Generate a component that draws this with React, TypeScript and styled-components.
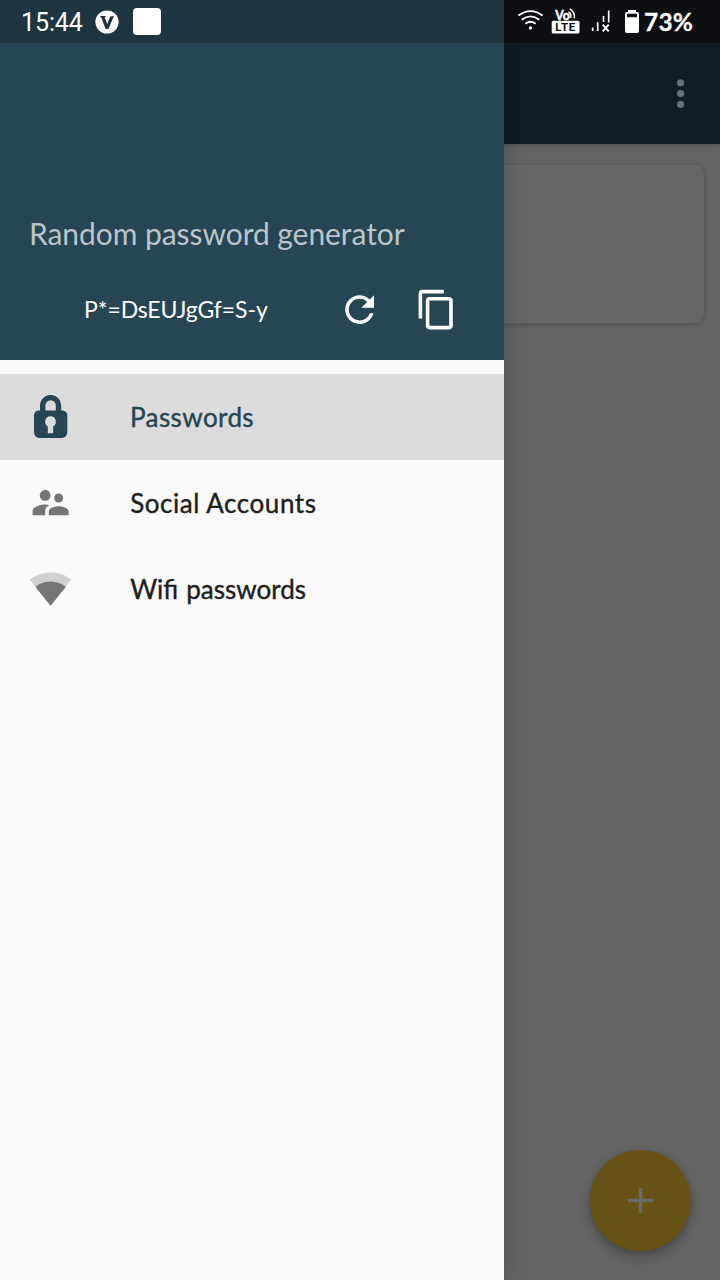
import React from "react";
import styled, { createGlobalStyle } from "styled-components";

const GlobalStyle = createGlobalStyle`
  * { box-sizing: border-box; }
  body { margin: 0; background: #fafafa; }
  svg { display: block; flex: none; }
`;

const Screen = styled.div`
  position: relative;
  width: 720px;
  height: 1280px;
  overflow: hidden;
  background: #646464;
  font-family: Lato, "Liberation Sans", sans-serif;
`;

const Page = styled.main`
  display: flex;
  flex-direction: column;
  height: 100%;
`;

const StatusStrip = styled.div`
  height: 43px;
  background: #0e0f13;
`;

const Toolbar = styled.header`
  display: flex;
  justify-content: flex-end;
  align-items: center;
  height: 101px;
  padding-right: 18px;
  background: #101d22;
  box-shadow: 0 1px 5px rgba(0, 0, 0, 0.25);
`;

const Card = styled.section`
  height: 158px;
  margin: 21px 16px 0;
  border-radius: 8px;
  background: #666666;
  box-shadow: 0 1px 5px rgba(0, 0, 0, 0.25);
`;

const AddButton = styled.button`
  display: flex;
  align-items: center;
  justify-content: center;
  width: 101px;
  height: 101px;
  margin: auto 29px 29px auto;
  padding: 0;
  border: 0;
  border-radius: 50%;
  background: #665214;
  box-shadow: 0 6px 12px rgba(0, 0, 0, 0.25), 0 0 5px rgba(0, 0, 0, 0.1);
`;

const Drawer = styled.aside`
  position: absolute;
  inset: 0 auto 0 0;
  width: 504px;
  background: #fafafa;
  box-shadow: 0 0 24px rgba(0, 0, 0, 0.2);
`;

const DrawerHeader = styled.div`
  display: flex;
  flex-direction: column;
  height: 360px;
  background: #274653;
`;

const DrawerStatus = styled.div`
  height: 43px;
  background: #1e343f;
`;

const Title = styled.h1`
  margin: 167px 0 0 29px;
  font-size: 30px;
  font-weight: 400;
  line-height: 46px;
  letter-spacing: -0.06px;
  white-space: nowrap;
  color: #b9c5ca;
`;

const Generator = styled.div`
  display: flex;
  align-items: center;
  height: 44px;
  margin-top: 32px;
`;

const Generated = styled.span`
  width: 254px;
  padding: 0 0 3px 84px;
  font-size: 23px;
  letter-spacing: -0.1px;
  white-space: nowrap;
  color: #fff;
`;

const IconButton = styled.button<{ $gap: number }>`
  margin: 0 0 0 ${(p) => p.$gap}px;
  padding: 0;
  border: 0;
  background: none;
`;

const Menu = styled.nav`
  padding-top: 14px;
`;

const MenuItem = styled.a<{ $active?: boolean }>`
  display: flex;
  align-items: center;
  gap: 58px;
  height: 86px;
  padding-left: 29px;
  font-size: 26px;
  color: ${(p) => (p.$active ? "#274653" : "#1f1f1f")};
  background: ${(p) => (p.$active ? "#dcdcdc" : "transparent")};
`;

const MenuLabel = styled.span<{ $spacing: number }>`
  letter-spacing: ${(p) => p.$spacing}px;
  word-spacing: ${(p) => (p.$spacing ? 0 : 1.5)}px;
  white-space: nowrap;
  -webkit-text-stroke: 0.4px currentColor;
`;

const StatusBar = styled.div`
  position: absolute;
  inset: 0 0 auto 0;
  display: flex;
  align-items: center;
  height: 43px;
  padding: 0 27px 0 21px;
  color: #fff;
`;

const Clock = styled.span`
  width: 74px;
  padding-top: 2px;
  font: 400 25px/43px Roboto, sans-serif;
  letter-spacing: -0.1px;
`;

const Notice = styled.span`
  width: 28px;
  height: 27px;
  margin-left: 14px;
  border-radius: 4px;
  background: #fff;
`;

const Battery = styled.span`
  width: 50px;
  padding-left: 1px;
  font-size: 24.5px;
  font-weight: 700;
  line-height: 43px;
  letter-spacing: 0.2px;
  -webkit-text-stroke: 0.3px currentColor;
`;

const StatusIcons = styled.div`
  display: flex;
  align-items: center;
  margin-left: auto;
`;

const MaterialIcon = ({ children, fill = "#fff" }: { children: React.ReactNode; fill?: string }) => (
  <svg width="43.2" height="43.2" viewBox="0 0 24 24" fill={fill}>{children}</svg>
);

const LockIcon = () => (
  <svg width="43" height="44" viewBox="0 0 43 44">
    <path d="M13.700 18V10.500a7.900 7.900 0 0 1 15.800 0V18" fill="none" stroke="#274653" strokeWidth="5.400" />
    <path fillRule="evenodd" fill="#274653" d="M9 15.500h25q4.300 1 4.300 5V36.500q0 5.500-5 6.500H10Q5 42 5 36.500V20.500q0-4 4-5zM21.500 21.200a5.500 5.500 0 0 0-2.700 10.200v6.900h5.400v-6.900a5.500 5.500 0 0 0-2.700-10.200z" />
  </svg>
);

const PhoneIcons = () => (
  <svg width="127" height="43" viewBox="516 0 127 43">
    <g fill="none" stroke="#fff" strokeWidth="1.900">
      <path d="M518.300 15.600q12.200-9 24.400 0" />
      <path d="M521.700 19.700q8.800-6.600 17.600 0" />
      <path d="M525.400 23.700q5.100-3.800 10.200 0" />
    </g>
    <circle cx="530.500" cy="27.900" r="1.700" fill="#fff" />
    <text x="555.300" y="19.600" fontFamily="Lato, sans-serif" fontWeight="700" fontSize="13" fill="#fff" stroke="#fff" strokeWidth=".5" textLength="14.500" lengthAdjust="spacingAndGlyphs">Vo</text>
    <g fill="none" stroke="#fff" strokeWidth="1.500">
      <path d="M568.500 12q3 1.500 2.200 6" />
      <path d="M569.800 8.900q5.500 3.500 4.500 9.500" />
    </g>
    <rect x="551.700" y="20.700" width="27.800" height="12.800" rx="1.500" fill="#fff" />
    <text x="555.300" y="31.300" fontFamily="Roboto, sans-serif" fontWeight="700" fontSize="11.500" fill="#0e0f13" textLength="20">LTE</text>
    <g stroke="#fff" strokeWidth="1.700">
      <path d="M592.700 27.500v3.500M597.700 22.300v8.700M603.500 16v6M608.700 10.500v12" />
      <path d="M602.700 24.700l6 6.600M608.700 24.700l-6 6.600" strokeWidth="1.900" />
    </g>
    <path d="M628 10h8v2h1a2 2 0 0 1 2 2v17a2 2 0 0 1-2 2h-10a2 2 0 0 1-2-2V14a2 2 0 0 1 2-2h1z" fill="#fff" />
    <path d="M627 13.700h10v3.500h-10z" fill="#0e0f13" />
  </svg>
);

export default function App() {
  return (
    <Screen>
      <GlobalStyle />
      <Page>
        <StatusStrip />
        <Toolbar>
          <MaterialIcon fill="#6b7072">
            <path d="M12 8a2 2 0 1 0 0-4 2 2 0 0 0 0 4zm0 2a2 2 0 1 0 0 4 2 2 0 0 0 0-4zm0 6a2 2 0 1 0 0 4 2 2 0 0 0 0-4z" />
          </MaterialIcon>
        </Toolbar>
        <Card />
        <AddButton aria-label="Add">
          <svg width="25" height="25" viewBox="0 0 25 25" fill="#6b6b69">
            <path d="M10.700 0h3.600v10.700H25v3.600H14.300V25h-3.600V14.300H0v-3.600h10.700z" />
          </svg>
        </AddButton>
      </Page>
      <Drawer>
        <DrawerHeader>
          <DrawerStatus />
          <Title>Random password generator</Title>
          <Generator>
            <Generated>P*=DsEUJgGf=S-y</Generated>
            <IconButton $gap={84} aria-label="Refresh">
              <MaterialIcon>
                <path d="M17.650 6.350C16.200 4.900 14.210 4 12 4c-4.420 0-7.990 3.580-7.990 8s3.570 8 7.990 8c3.730 0 6.840-2.550 7.730-6h-2.080c-.82 2.330-3.040 4-5.650 4-3.310 0-6-2.690-6-6s2.690-6 6-6c1.660 0 3.140.69 4.220 1.780L13 11h7V4l-2.350 2.350z" />
              </MaterialIcon>
            </IconButton>
            <IconButton $gap={34} aria-label="Copy">
              <MaterialIcon>
                <path d="M16 1H4c-1.100 0-2 .9-2 2v14h2V3h12V1zm3 4H8c-1.100 0-2 .9-2 2v14c0 1.100.9 2 2 2h11c1.100 0 2-.9 2-2V7c0-1.100-.9-2-2-2zm0 16H8V7h11v14z" />
              </MaterialIcon>
            </IconButton>
          </Generator>
        </DrawerHeader>
        <Menu>
          <MenuItem $active>
            <LockIcon />
            <MenuLabel $spacing={0.4}>Passwords</MenuLabel>
          </MenuItem>
          <MenuItem>
            <MaterialIcon fill="#757575">
              <path d="M16.500 12c1.380 0 2.490-1.120 2.490-2.500S17.880 7 16.500 7C15.120 7 14 8.120 14 9.500s1.120 2.500 2.500 2.500zM9 11c1.660 0 2.990-1.340 2.990-3S10.660 5 9 5C7.340 5 6 6.340 6 8s1.340 3 3 3zm7.500 3c-1.830 0-5.500.92-5.500 2.750V19h11v-2.250c0-1.830-3.670-2.750-5.500-2.750zM9 13c-2.330 0-7 1.170-7 3.500V19h7v-2.250c0-.85.33-2.340 2.370-3.470C10.500 13.100 9.660 13 9 13z" />
            </MaterialIcon>
            <MenuLabel $spacing={0.55}>Social Accounts</MenuLabel>
          </MenuItem>
          <MenuItem>
            <MaterialIcon fill="#757575">
              <path fillOpacity=".3" d="M12.010 21.490L23.640 7c-.45-.34-4.930-4-11.640-4C5.280 3 .81 6.660.36 7l11.630 14.490.01.01.01-.01z" />
              <path d="M3.530 10.950l8.460 10.540.01.01.01-.01 8.460-10.540C20.040 10.620 16.810 8 12 8c-4.810 0-8.040 2.620-8.470 2.950z" />
            </MaterialIcon>
            <MenuLabel $spacing={0}>Wifi passwords</MenuLabel>
          </MenuItem>
        </Menu>
      </Drawer>
      <StatusBar>
        <Clock>15:44</Clock>
        <svg width="24" height="24" viewBox="0 0 24 24">
          <circle cx="12" cy="12" r="11.600" fill="#fff" />
          <path d="M5.300 6h5.200v1.200l-.8.300 2.500 6.500L15.200 6.500l3.800-.6-5.600 13h-2.800L6.300 7.500l-1-.3z" fill="#1e343f" />
        </svg>
        <Notice />
        <StatusIcons>
          <PhoneIcons />
          <Battery>73%</Battery>
        </StatusIcons>
      </StatusBar>
    </Screen>
  );
}
